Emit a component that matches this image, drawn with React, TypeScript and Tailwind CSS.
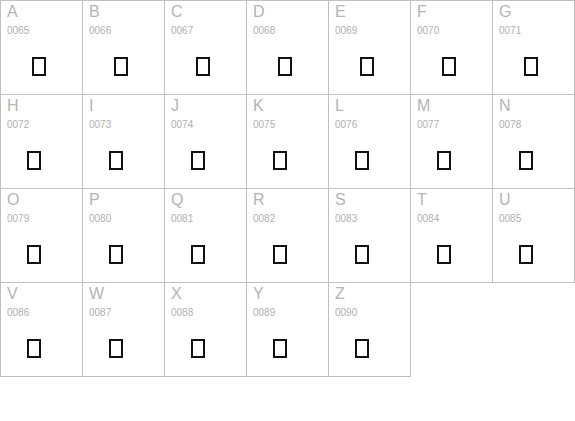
const glyphs = Array.from({ length: 26 }, (_, i) => ({
  char: String.fromCharCode(65 + i),
  code: String(65 + i).padStart(4, '0'),
}))

export default function App() {
  return (
    <div className="bg-white w-[575px] h-[421px]" style={{ fontFamily: '"Liberation Sans", Arial, sans-serif' }}>
      <div className="inline-grid grid-cols-[repeat(7,82px)] border-l border-t border-[#c0c0c0]">
        {glyphs.map((g, i) => (
          <div key={g.char} className="h-[94px] border-r border-b border-[#c0c0c0] flex flex-col pl-[6px]">
            <span className="pt-[2px] text-[16px] leading-[18px] text-[#b4b4b4]">{g.char}</span>
            <span className="mt-[4px] text-[10px] leading-[12px] text-[#b0b0b0]">{g.code}</span>
            <div
              className={
                'mt-[20px] w-[14px] h-[19px] border-2 border-[#111]' +
                (i < 7 ? ' ml-[25px]' : ' ml-[20px]')
              }
            />
          </div>
        ))}
      </div>
    </div>
  )
}
